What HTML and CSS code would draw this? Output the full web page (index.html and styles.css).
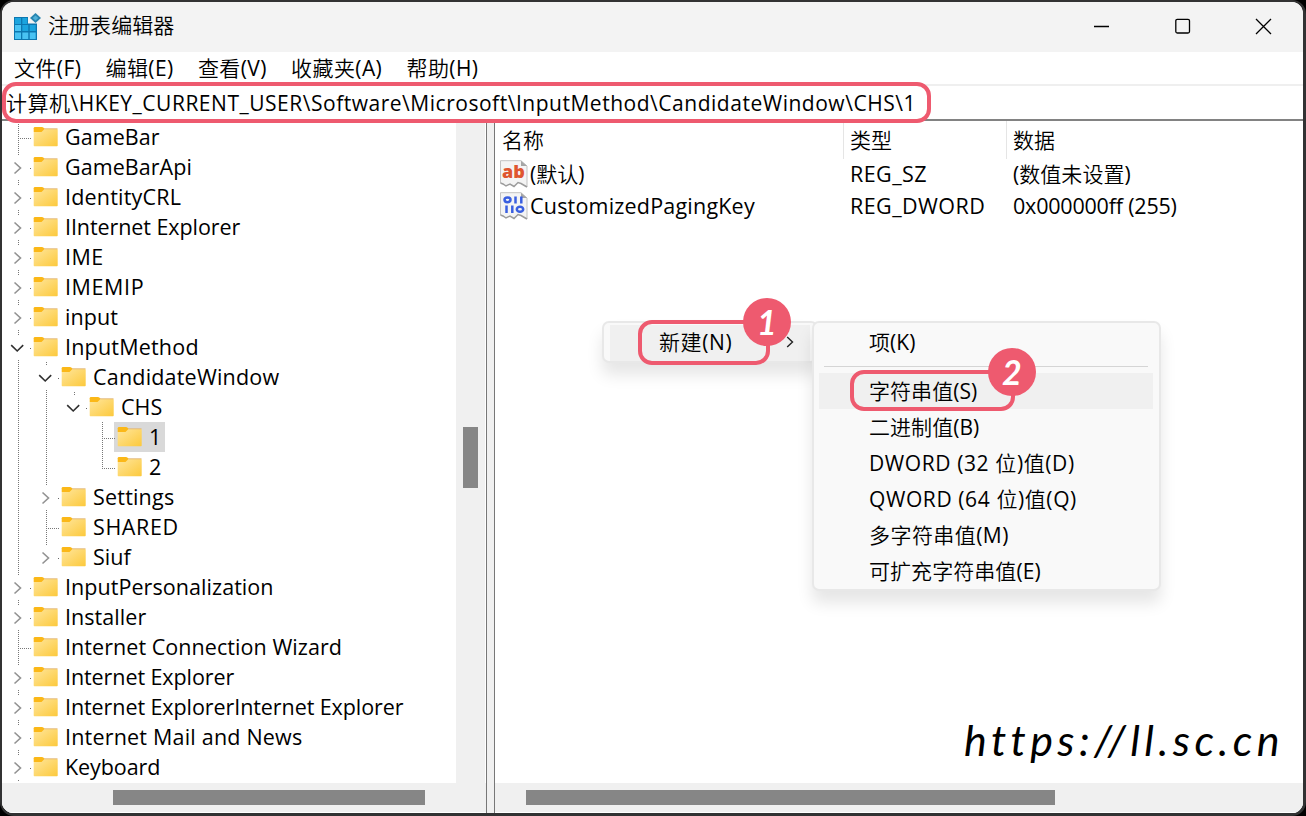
FILE: index.html
```html
<!DOCTYPE html>
<html lang="zh-CN">
<head>
<meta charset="utf-8">
<title>注册表编辑器</title>
<link rel="stylesheet" href="styles.css">
</head>
<body>
<svg width="0" height="0" class="defs">
  <defs>
    <linearGradient id="fg" x1="0" y1="0" x2="1" y2="1"><stop offset="0" stop-color="#ffe69c"/><stop offset="1" stop-color="#fcc93c"/></linearGradient>
    <symbol id="folder" viewBox="0 0 25 21"><path d="M.7 2.300Q.7 1 2 1H9Q10.500 1 11.300 2.500V6H.7Z" fill="#fbb818"/><path d="M.7 6H8.500L11.500 3H24Q24.700 3 24.700 3.800V19.500Q24.700 20.200 24 20.200H1.400Q.7 20.200 .7 19.500Z" fill="url(#fg)"/><path d="M11 2.800H24.500" stroke="#e3b877" stroke-width="1"/></symbol>
    <symbol id="cr" viewBox="0 0 14 14"><path d="M4.500 1.500L10.500 7L4.500 12.500" fill="none" stroke="#929292" stroke-width="1.600"/></symbol>
    <symbol id="cd" viewBox="0 0 14 14"><path d="M1.200 4.200L7.200 10L13.200 4.200" fill="none" stroke="#303030" stroke-width="1.600"/></symbol>
    <symbol id="doc" viewBox="0 0 28 28"><path d="M.5 .7H21L27 6V27H25L21 24L18 22.500L14 26.500L10 24L6 26L3 24L.5 23Z" fill="#f4f4f4"/><path d="M.5 23V.7H21L27 6V27" fill="none" stroke="#c2c2c2"/><path d="M21 .7V6H27Z" fill="#a6a6a6"/><path d="M.5 23L3 24L6 26L10 24L14 26.500L18 22.500L21 23.500L27 27" fill="none" stroke="#9c9c9c" stroke-width="1.500"/></symbol>
  </defs>
</svg>
<div class="window">
  <header class="titlebar">
    <svg class="appicon" viewBox="0 0 28 28"><path d="M1 4H15V10.500H24V27H1Z" fill="#0d77b0"/><g fill="#49c3f3"><path d="M2 12h6v6H2zM2 19.500h6v6.500H2zM9.300 19.500h6v6.500h-6zM16.700 19.500h6v6.500h-6z"/></g><g fill="#1ba4de"><path d="M2 5h6v6H2zM9.300 5h5v6h-5zM9.300 12h6v6h-6zM16.700 12h6v6h-6z"/></g><path d="M22.500 0L28 5L22.500 10L17 5Z" fill="#2785b0"/><path d="M22.500 2.500L25.300 5L22.500 7.500L19.700 5Z" fill="#4fb0d8"/></svg>
    <h1>注册表编辑器</h1>
    <div class="controls">
      <svg viewBox="0 0 16 16"><path d="M0 8.500H15"/></svg>
      <svg viewBox="0 0 16 16"><rect x=".8" y="1.300" width="13.700" height="13.700" rx="1.500"/></svg>
      <svg viewBox="0 0 16 16"><path d="M0 1L15 16M15 1L0 16"/></svg>
    </div>
  </header>
  <nav class="menubar"><span>文件(F)</span><span>编辑(E)</span><span>查看(V)</span><span>收藏夹(A)</span><span>帮助(H)</span></nav>
  <div class="address"><span>计算机\HKEY_CURRENT_USER\Software\Microsoft\InputMethod\CandidateWindow\CHS\1</span></div>
  <main class="panes">
    <section class="left">
      <div class="treewrap">
        <ul class="tree">
          <li><i class="t"></i><b><svg class="f"><use href="#folder"/></svg><span>GameBar</span></b></li>
          <li><i class="c"><svg><use href="#cr"/></svg></i><b><svg class="f"><use href="#folder"/></svg><span>GameBarApi</span></b></li>
          <li><i class="c"><svg><use href="#cr"/></svg></i><b><svg class="f"><use href="#folder"/></svg><span class="loose">IdentityCRL</span></b></li>
          <li><i class="c"><svg><use href="#cr"/></svg></i><b><svg class="f"><use href="#folder"/></svg><span class="snug">IInternet Explorer</span></b></li>
          <li><i class="c"><svg><use href="#cr"/></svg></i><b><svg class="f"><use href="#folder"/></svg><span class="caps">IME</span></b></li>
          <li><i class="c"><svg><use href="#cr"/></svg></i><b><svg class="f"><use href="#folder"/></svg><span class="wide">IMEMIP</span></b></li>
          <li><i class="c"><svg><use href="#cr"/></svg></i><b><svg class="f"><use href="#folder"/></svg><span>input</span></b></li>
          <li><i class="c"><svg><use href="#cd"/></svg></i><b><svg class="f"><use href="#folder"/></svg><span class="loose">InputMethod</span></b></li>
          <li><i class="v"></i><i class="c"><svg><use href="#cd"/></svg></i><b><svg class="f"><use href="#folder"/></svg><span class="loose">CandidateWindow</span></b></li>
          <li><i class="v"></i><i class="v"></i><i class="c last"><svg><use href="#cd"/></svg></i><b><svg class="f"><use href="#folder"/></svg><span>CHS</span></b></li>
          <li><i class="v"></i><i class="v"></i><i></i><i class="t"></i><b class="sel"><svg class="f"><use href="#folder"/></svg><span>1</span></b></li>
          <li><i class="v"></i><i class="v"></i><i></i><i class="t end"></i><b><svg class="f"><use href="#folder"/></svg><span>2</span></b></li>
          <li><i class="v"></i><i class="c"><svg><use href="#cr"/></svg></i><b><svg class="f"><use href="#folder"/></svg><span class="loose">Settings</span></b></li>
          <li><i class="v"></i><i class="t"></i><b><svg class="f"><use href="#folder"/></svg><span class="wide">SHARED</span></b></li>
          <li><i class="v"></i><i class="c last"><svg><use href="#cr"/></svg></i><b><svg class="f"><use href="#folder"/></svg><span>Siuf</span></b></li>
          <li><i class="c"><svg><use href="#cr"/></svg></i><b><svg class="f"><use href="#folder"/></svg><span>InputPersonalization</span></b></li>
          <li><i class="c"><svg><use href="#cr"/></svg></i><b><svg class="f"><use href="#folder"/></svg><span>Installer</span></b></li>
          <li><i class="t"></i><b><svg class="f"><use href="#folder"/></svg><span>Internet Connection Wizard</span></b></li>
          <li><i class="c"><svg><use href="#cr"/></svg></i><b><svg class="f"><use href="#folder"/></svg><span class="snug">Internet Explorer</span></b></li>
          <li><i class="c"><svg><use href="#cr"/></svg></i><b><svg class="f"><use href="#folder"/></svg><span class="snug">Internet ExplorerInternet Explorer</span></b></li>
          <li><i class="c"><svg><use href="#cr"/></svg></i><b><svg class="f"><use href="#folder"/></svg><span class="loose">Internet Mail and News</span></b></li>
          <li><i class="c"><svg><use href="#cr"/></svg></i><b><svg class="f"><use href="#folder"/></svg><span class="snug">Keyboard</span></b></li>
        </ul>
        <div class="vbar"><div></div></div>
      </div>
      <div class="hbar"><div></div></div>
    </section>
    <section class="right">
      <div class="values">
        <div class="hd"><span>名称</span><span>类型</span><span>数据</span></div>
        <div class="val"><span class="name"><svg viewBox="0 0 28 28"><use href="#doc"/><text class="ab" x="13.500" y="17.500">ab</text></svg><span class="cn">(默认)</span></span><span class="caps">REG_SZ</span><span class="cn">(数值未设置)</span></div>
        <div class="val"><span class="name"><svg viewBox="0 0 28 28"><use href="#doc"/><g fill="none" stroke="#3a5fe0" stroke-width="2.500"><ellipse cx="7.500" cy="7.800" rx="3" ry="2.400"/><path d="M15.500 4.500V11.500M21.300 4.500V11.500M6.500 13.500V21M12.300 13.500V21"/><ellipse cx="20" cy="17.200" rx="3.200" ry="2.500"/></g></svg><span class="loose">CustomizedPagingKey</span></span><span class="caps">REG_DWORD</span><span class="tight">0x000000ff (255)</span></div>
      </div>
      <div class="hbar"><div></div></div>
    </section>
  </main>
</div>
<div class="menu first"><span>新建(N)</span><svg viewBox="0 0 8 12"><path d="M1.200 1L6.500 6L1.200 11"/></svg></div>
<div class="menu second">
  <span>项(K)</span><hr>
  <span class="hot">字符串值(S)</span><span>二进制值(B)</span><span class="wide">DWORD (32 位)值(D)</span><span class="wide">QWORD (64 位)值(Q)</span><span class="caps">多字符串值(M)</span><span>可扩充字符串值(E)</span>
</div>
<div class="mark m0"></div>
<div class="mark m1"></div><div class="badge b1">1</div>
<div class="mark m2"></div><div class="badge b2">2</div>
<div class="url">https://ll.sc.cn</div>
</body>
</html>
```
FILE: styles.css
```css
* { box-sizing: border-box; }
body { margin: 0; height: 816px; overflow: hidden; background: #000; position: relative; color: #000; font: 21.5px/30px "Open Sans", "Noto Sans CJK SC DemiLight", "Noto Sans CJK SC Light", "Noto Sans CJK SC", sans-serif; letter-spacing: .06px; white-space: nowrap; }
.defs { position: absolute; }
.window { width: 1306px; height: 816px; border: 2px solid #323233; border-right-width: 3px; border-bottom-width: 3px; border-radius: 14px; overflow: hidden; display: flex; flex-direction: column; background: #fff; }
.titlebar { height: 50px; flex: none; background: #f3f3f3; display: flex; align-items: center; padding: 0 31px 2px 11px; }
.appicon { width: 28px; height: 28px; margin: 2px 7px 0 0; }
h1 { margin: 0 0 2px; font: inherit; font-size: 21px; line-height: 28px; flex: 1; }
.controls { display: flex; gap: 65px; }
.controls svg { width: 16px; height: 16px; overflow: visible; fill: none; stroke: #000; stroke-width: 1.3; }
.menubar { height: 32px; flex: none; padding: 1px 12px; display: flex; gap: 24.3px; font-size: 21px; letter-spacing: .4px; }
.address { height: 37px; flex: none; border-top: 2px solid #efefef; border-bottom: 2px solid #828282; padding-left: 4px; line-height: 34px; font-size: 21px; letter-spacing: .52px; }
.panes { flex: 1; min-height: 0; display: flex; background: #f0f0f0; }
.left { width: 485px; border-right: 1px solid #777; display: flex; flex-direction: column; }
.treewrap { flex: 1; min-height: 0; display: flex; }
.tree { flex: 1; margin: 0; padding: 1px 0 0 2px; list-style: none; overflow: hidden; background: #fff; }
li { height: 30px; display: flex; }
i { width: 28px; height: 30px; flex: none; position: relative; display: block; }
i.v::before, i.t::before, i.c::before { content: ""; position: absolute; left: 14px; top: 0; width: 1px; height: 30px; background: repeating-linear-gradient(#777 0 1px, transparent 1px 2px); }
i.end::before { height: 17px; }
i.c::before { height: 4px; }
i.c:not(.last)::after { content: ""; position: absolute; left: 14px; top: 28px; width: 1px; height: 2px; border-top: 1px solid #777; }
i.t::after { content: ""; position: absolute; left: 16px; top: 16px; width: 12px; height: 1px; background: repeating-linear-gradient(90deg, #777 0 1px, transparent 1px 2px); }
i.c { background: linear-gradient(#666, #666) 26px 16px / 1px 1px no-repeat; }
i svg { position: absolute; left: 6px; top: 9px; width: 14px; height: 14px; }
b { font-weight: 400; display: flex; padding-left: 1px; height: 30px; }
.f { width: 25px; height: 21px; margin: 4px 7px 0 0; }
.sel { background: #d9d9d9; margin-left: -2px; padding: 0 4px 0 3px; }
.tight { letter-spacing: -.2px; }
.snug { letter-spacing: -.08px; }
.loose { letter-spacing: .2px; }
.caps { letter-spacing: .44px; }
.wide { letter-spacing: .6px; }
.cn { font-size: 21px; }
.vbar { width: 30px; background: #f0f0f0; padding: 306px 7px 0 7px; border-right: 1px solid #fff; }
.vbar div { height: 61px; background: #868686; }
.hbar { height: 30px; background: #f0f0f0; padding-top: 7px; flex: none; border-bottom: 1px solid #fff; }
.hbar div { height: 15px; background: #868686; }
.left .hbar div { margin-left: 111px; width: 312px; }
.right { margin-left: 7px; flex: 1; border-left: 1px solid #777; display: flex; flex-direction: column; }
.values { flex: 1; background: #fff; }
.right .hbar div { margin-left: 31px; width: 529px; }
.hd, .val { display: grid; grid-template-columns: 348px 163px 1fr; }
.hd { height: 37px; font-size: 21px; line-height: 38px; }
.hd span { padding-left: 7px; }
.hd span + span { border-left: 1px solid #e5e5e5; padding-left: 6px; }
.val { height: 32px; line-height: 32px; }
.val > span { padding-left: 7px; }
.val .name { padding-left: 5px; display: flex; gap: 2px; }
.name svg { width: 28px; height: 28px; margin-top: 2px; overflow: visible; }
.ab { font: 800 18px "Open Sans", sans-serif; letter-spacing: 0; fill: #df5630; text-anchor: middle; }
.menu { position: absolute; background: #f9f9f9; border: 2px solid #e8e8e8; border-radius: 7px; box-shadow: 0 12px 16px rgba(0,0,0,.1); font-size: 21px; }
.first { left: 602px; top: 321px; width: 216px; height: 42px; background: linear-gradient(#f0f0f0, #f0f0f0) 6px 2px / 200px 100% no-repeat #f9f9f9; padding: 4px 0 0 55px; letter-spacing: .6px; }
.first svg { position: absolute; left: 182px; top: 13px; width: 8px; height: 12px; fill: none; stroke: #222; stroke-width: 1.4; }
.second { left: 812px; top: 321px; width: 349px; height: 270px; padding: 1px 6px 1px 5px; }
.second span { display: block; height: 36px; line-height: 36px; padding-left: 50px; }
.second hr { border: 0; height: 1px; margin: 6px 5px; background: #d5d5d5; }
.second .hot { background: #f0f0f0; }
.mark { position: absolute; border: 4px solid #ee5a6f; border-radius: 14px; }
.m0 { left: 2px; top: 82px; width: 929px; height: 41px; }
.m1 { left: 638px; top: 320px; width: 132px; height: 45px; }
.m2 { left: 850px; top: 370px; width: 165px; height: 41px; }
.badge { position: absolute; width: 48px; height: 48px; border-radius: 50%; background: #ee5a6f; color: #fff; text-align: center; font: italic 700 34px/48px Lato, sans-serif; }
.b1 { left: 743px; top: 298px; }
.b2 { left: 988px; top: 348px; }
.url { position: absolute; left: 964px; top: 715px; font: italic 400 43px/50px Lato, sans-serif; letter-spacing: 4.4px; }
```
